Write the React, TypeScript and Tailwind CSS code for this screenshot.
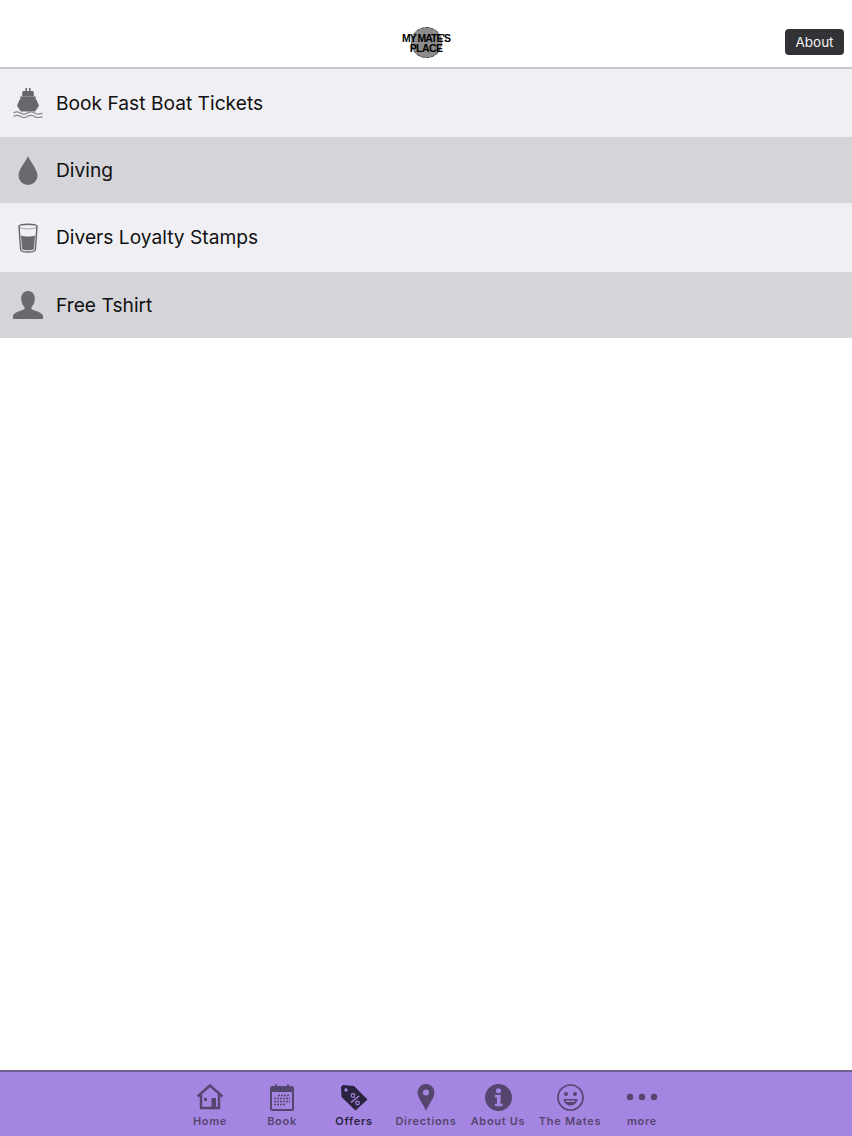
import React from 'react';

const FONT = "font-['Inter','Liberation_Sans',sans-serif]";

const ShipIcon = () => (
  <svg width="30" height="30" viewBox="0 0 30 30" fill="#69676c">
    <rect x="12.500" y="0" width="1.500" height="4" />
    <rect x="16" y="0" width="1.500" height="4" />
    <path d="M9.500 3h11l0.500 5.500H9z" />
    <path d="M7.500 8.500h15l0.500 3.500H7z" />
    <path d="M6.500 12h17l2.500 5.500c-1 2-2.500 4-4 6H8c-1.500-2-3-4-4-6z" />
    <path d="M0.500 25q3.500-2.400 7 0t7 0t7 0t8 0" fill="none" stroke="#8a888d" strokeWidth="1.200" />
    <path d="M0.500 28.500q3.500-2.400 7 0t7 0t7 0t8 0" fill="none" stroke="#8a888d" strokeWidth="1.200" />
  </svg>
);

const DropIcon = () => (
  <svg width="20" height="29" viewBox="0 0 20 29" fill="#6b696e">
    <path d="M10 0C11 4 19.500 13 19.500 19.500A9.500 9.500 0 0 1 0.500 19.500C0.500 13 9 4 10 0z" />
  </svg>
);

const GlassIcon = () => (
  <svg width="20" height="30" viewBox="0 0 20 30">
    <path d="M1 3.500C1 0.500 19 0.500 19 3.500L17.300 27C17 29.500 3 29.500 2.700 27z" fill="none" stroke="#6b696e" strokeWidth="1.500" />
    <path d="M3 12.500c4 1.300 10 1.300 14 0L15.800 26.500c-2.500 1-9 1-11.600 0z" fill="#6b696e" />
    <path d="M2 5c4 1.200 12 1.200 16 0" fill="none" stroke="#a9a8ac" strokeWidth="1" />
  </svg>
);

const PersonIcon = () => (
  <svg width="30" height="28" viewBox="0 0 30 28" fill="#6b696e">
    <path d="M15 0c4 0 6.800 3 6.800 7.500 0 3.600-1.300 7-3.300 8.500v2c3 2 11.500 3 11.500 7.500V28H0v-2.500c0-4.500 8.500-5.500 11.500-7.500v-2C9.500 14.500 8.200 11.100 8.200 7.500 8.200 3 11 0 15 0z" />
  </svg>
);

const rows = [
  { label: 'Book Fast Boat Tickets', icon: <ShipIcon />, h: 'h-[68px]', bg: 'bg-[#f0eff4]' },
  { label: 'Diving', icon: <DropIcon />, h: 'h-[66px]', bg: 'bg-[#d5d4d8]' },
  { label: 'Divers Loyalty Stamps', icon: <GlassIcon />, h: 'h-[69px]', bg: 'bg-[#f0eff4]' },
  { label: 'Free Tshirt', icon: <PersonIcon />, h: 'h-[66px]', bg: 'bg-[#d5d4d8]' },
];

const TAB = '#54466e';

const HomeIcon = () => (
  <svg width="28" height="26" viewBox="0 0 28 26" fill="none" stroke={TAB} strokeWidth="2.400">
    <path d="M1.500 12.500 14 1.500l12.500 11" />
    <path d="M5 10v14h18V10" />
    <rect x="15.500" y="14" width="4.500" height="10" fill={TAB} stroke="none" />
    <rect x="8" y="14" width="3" height="3" fill={TAB} stroke="none" />
  </svg>
);

const CalendarIcon = () => (
  <svg width="24" height="27" viewBox="0 0 24 27" fill="none">
    <rect x="1" y="3" width="22" height="23" rx="1.500" stroke={TAB} strokeWidth="2" />
    <rect x="1" y="3" width="22" height="5" fill={TAB} />
    <rect x="5" y="0.500" width="2" height="5" fill={TAB} />
    <rect x="17" y="0.500" width="2" height="5" fill={TAB} />
    <path d="M8 11.500h12M4 14.500h16M4 17.500h16M4 20.500h12" stroke={TAB} strokeWidth="1.600" strokeDasharray="2 1" />
  </svg>
);

const TagIcon = () => (
  <svg width="28" height="27" viewBox="0 0 28 27">
    <path d="M1 3 3 1 14 2 27.500 15.500 15.500 26.500 1.500 13z" fill="#2a2340" />
    <circle cx="6" cy="6" r="1.700" fill="#a585e2" />
    <path d="M11 18.500 19 12" stroke="#a585e2" strokeWidth="1.500" />
    <circle cx="13" cy="11.500" r="1.800" fill="none" stroke="#a585e2" strokeWidth="1.200" />
    <circle cx="17.500" cy="19" r="1.800" fill="none" stroke="#a585e2" strokeWidth="1.200" />
  </svg>
);

const PinIcon = () => (
  <svg width="18" height="27" viewBox="0 0 18 27">
    <path fillRule="evenodd" d="M9 0a8.500 8.500 0 0 1 8.500 8.500C17.500 14 11 21 9 27 7 21 0.500 14 0.500 8.500A8.500 8.500 0 0 1 9 0zm0 5.500a3 3 0 1 0 0 6 3 3 0 0 0 0-6z" fill={TAB} />
  </svg>
);

const InfoIcon = () => (
  <svg width="27" height="27" viewBox="0 0 26 26">
    <circle cx="13" cy="13" r="13" fill={TAB} />
    <circle cx="13" cy="6.500" r="2.500" fill="#a585e2" />
    <path d="M9.500 10.500h5.500v8.500h2v2.500H9.500V19h2v-6h-2z" fill="#a585e2" />
  </svg>
);

const SmileIcon = () => (
  <svg width="27" height="27" viewBox="0 0 27 27" fill="none">
    <circle cx="13.500" cy="13.500" r="12.500" stroke={TAB} strokeWidth="1.700" />
    <circle cx="9" cy="10" r="2" fill={TAB} />
    <circle cx="18" cy="10" r="2" fill={TAB} />
    <path d="M6.500 15h14c-0.500 4-3.500 6.500-7 6.500S7 19 6.500 15z" fill={TAB} />
    <path d="M9 16.500h9v1.500H9z" fill="#a585e2" />
  </svg>
);

const DotsIcon = () => (
  <svg width="32" height="8" viewBox="0 0 32 8" fill={TAB}>
    <circle cx="4" cy="4" r="3.200" />
    <circle cx="16" cy="4" r="3.200" />
    <circle cx="28" cy="4" r="3.200" />
  </svg>
);

const tabs = [
  { label: 'Home', icon: <HomeIcon /> },
  { label: 'Book', icon: <CalendarIcon /> },
  { label: 'Offers', icon: <TagIcon />, active: true },
  { label: 'Directions', icon: <PinIcon /> },
  { label: 'About Us', icon: <InfoIcon /> },
  { label: 'The Mates', icon: <SmileIcon /> },
  { label: 'more', icon: <DotsIcon /> },
];

const Logo = () => (
  <div className="relative w-[42px] h-[36px] flex items-center justify-center">
    <div className="w-[31px] h-[31px] rounded-full bg-[#8c8c8c] border border-dashed border-[#444444]" />
    <div className="absolute inset-0 flex flex-col items-center justify-center font-['Liberation_Sans',sans-serif] font-bold text-black leading-[10px]">
      <span className="text-[10.500px] tracking-[-1px] whitespace-nowrap">MY MATE'S</span>
      <span className="text-[10.500px] tracking-[-0.6px]">PLACE</span>
    </div>
  </div>
);

export default function App() {
  return (
    <div className={`h-[1136px] flex flex-col bg-white overflow-hidden ${FONT}`}>
      {/* Header */}
      <header className="h-[69px] shrink-0 relative flex items-center justify-center bg-white border-b-2 border-[#c8c7cb]">
        <div className="mt-[18px]">
          <Logo />
        </div>
        <button className="absolute right-2 top-[29px] w-[59px] h-[26px] rounded-[4px] bg-[#333236] text-[#f2f2f2] text-[13.500px] flex items-center justify-center">
          About
        </button>
      </header>

      {/* List */}
      <main className="flex-1">
        {rows.map((row) => (
          <div key={row.label} className={`flex items-center ${row.h} ${row.bg}`}>
            <div className="w-[56px] shrink-0 flex items-center justify-center">{row.icon}</div>
            <span className="text-[19.200px] text-[#111111]">{row.label}</span>
          </div>
        ))}
      </main>

      {/* Tab bar */}
      <footer className="h-[66px] shrink-0 flex justify-center bg-[#a585e2] border-t-2 border-[#6f5e91]">
        {tabs.map((tab) => (
          <div key={tab.label} className="w-[72px] flex flex-col items-center">
            <div className="h-[34px] mt-[8px] flex items-center justify-center">{tab.icon}</div>
            <span className={`text-[11px] leading-[14px] font-semibold tracking-[0.7px] whitespace-nowrap ${tab.active ? 'text-[#2a2340]' : 'text-[#54466e]'}`}>
              {tab.label}
            </span>
          </div>
        ))}
      </footer>
    </div>
  );
}
